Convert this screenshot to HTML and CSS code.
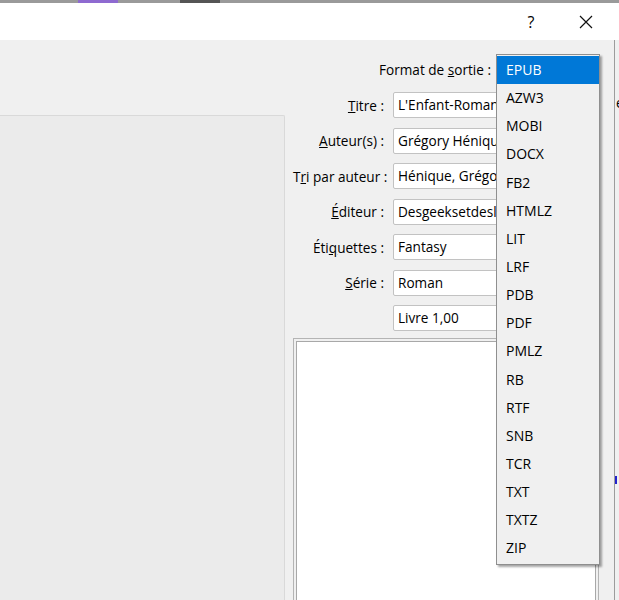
FILE: index.html
```html
<!DOCTYPE html>
<html lang="fr">
<head>
  <meta charset="UTF-8">
  <title>Convertir le livre</title>
  <link rel="stylesheet" href="styles.css">
</head>
<body>

<div class="behind">
  <span class="behind-tab"></span>
  <span class="behind-mark"></span>
</div>

<div class="dialog">
  <div class="titlebar">
    <span class="tb-btn help">?</span>
    <span class="tb-btn close">
      <svg width="14" height="14" viewBox="0 0 14 14"><path d="M1 1 L13 13 M13 1 L1 13" stroke="#111" stroke-width="1.2" fill="none"/></svg>
    </span>
  </div>

  <div class="content">
    <div class="left-panel"></div>

    <div class="right">
      <div class="format-row">
        <span class="label">Format de <u>s</u>ortie :</span>
        <span class="format-box"></span>
      </div>

      <div class="form">
        <span class="label"><u>T</u>itre :</span>
        <div class="field">L'Enfant-Roman</div>
        <span class="label"><u>A</u>uteur(s) :</span>
        <div class="field">Grégory Hénique</div>
        <span class="label">T<u>r</u>i par auteur :</span>
        <div class="field">Hénique, Grégory</div>
        <span class="label"><u>É</u>diteur :</span>
        <div class="field">Desgeeksetdeslettres</div>
        <span class="label">Éti<u>q</u>uettes :</span>
        <div class="field">Fantasy</div>
        <span class="label"><u>S</u>érie :</span>
        <div class="field">Roman</div>
        <span class="label"></span>
        <div class="field">Livre 1,00</div>
      </div>

      <div class="comments">
        <div class="comments-inner"></div>
      </div>
    </div>

    <div class="edge">
      <span class="edge-e">e</span>
      <span class="edge-blue"></span>
    </div>
  </div>

  <ul class="dropdown">
    <li class="selected">EPUB</li>
    <li>AZW3</li>
    <li>MOBI</li>
    <li>DOCX</li>
    <li>FB2</li>
    <li>HTMLZ</li>
    <li>LIT</li>
    <li>LRF</li>
    <li>PDB</li>
    <li>PDF</li>
    <li>PMLZ</li>
    <li>RB</li>
    <li>RTF</li>
    <li>SNB</li>
    <li>TCR</li>
    <li>TXT</li>
    <li>TXTZ</li>
    <li>ZIP</li>
  </ul>
</div>

</body>
</html>
```

FILE: styles.css
```css
html, body { margin: 0; padding: 0; }
body { width: 619px; height: 600px; overflow: hidden; background: #f0f0f0; font-family: "Open Sans", "Noto Sans", sans-serif; font-size: 13.6px; color: #000; }

.behind { height: 3px; background: #9a9a9a; display: flex; }
.behind-tab { margin-left: 78px; width: 40px; background: #8e6ad0; }
.behind-mark { margin-left: 62px; width: 40px; background: #555; }

.dialog { position: relative; height: 597px; }
.titlebar { height: 37px; background: #fff; display: flex; justify-content: flex-end; align-items: center; }
.tb-btn { width: 46px; text-align: center; font-size: 16px; }
.help { margin-right: 9px; }
.close { margin-right: 10px; display: flex; justify-content: center; }

.content { display: flex; height: 560px; }
.content > * { flex-shrink: 0; }
.left-panel { width: 284px; margin-top: 75px; background: #ebebeb; border: 1px solid #d9d9d9; border-left: none; border-bottom: none; border-radius: 0 2px 0 0; }

.right { width: 306px; margin-left: 8px; display: flex; flex-direction: column; }
.label { text-align: right; white-space: nowrap; }
.format-row { display: flex; align-items: center; height: 26px; margin-top: 16px; }
.format-row .label { width: 198px; }
.form { display: grid; grid-template-columns: 91px 1fr; column-gap: 9px; row-gap: 9.5px; margin-top: 10px; align-items: center; }
.field { height: 24px; line-height: 24px; padding-left: 4px; background: #fff; border: 1px solid #c2c2c2; border-radius: 2px; white-space: nowrap; overflow: hidden; }
.comments { flex: 1; margin-top: 7px; border: 1px solid #b4b4b4; border-bottom: none; padding: 2px 2px 0 2px; background: #f0f0f0; display: flex; }
.comments-inner { flex: 1; background: #fff; border: 1px solid #a8a8a8; border-bottom: none; }

.edge { position: relative; width: 10px; margin-left: 15px; border-left: 1px solid #9c9c9c; }
.edge-e { position: absolute; left: 1px; top: 53px; }
.edge-blue { position: absolute; left: 0; top: 436px; width: 2px; height: 8px; background: #2222cc; }

.dropdown { position: absolute; left: 496px; top: 51px; width: 102px; margin: 0; padding: 1px 0; list-style: none; background: #f0f0f0; border: 1px solid #8f8f8f; box-shadow: 2px 2px 2px rgba(0,0,0,0.35); }
.dropdown li { height: 28.15px; line-height: 28px; padding-left: 9px; font-size: 14px; }
.dropdown li.selected { background: #0078d7; color: #fff; }
```
